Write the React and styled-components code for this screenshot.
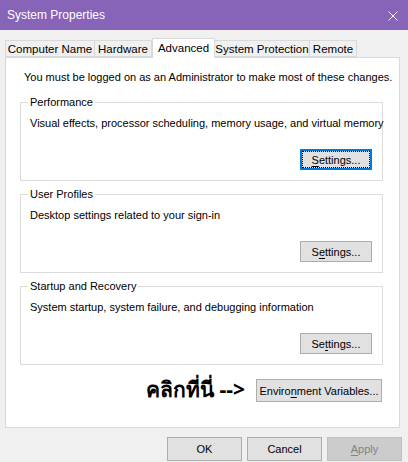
import React from 'react';
import styled, { createGlobalStyle } from 'styled-components';

const GlobalStyle = createGlobalStyle`
  html, body {
    margin: 0;
    padding: 0;
    background: #f0f0f0;
  }
  body {
    font-family: "Liberation Sans", Arial, sans-serif;
    font-size: 11px;
    color: #000;
  }
`;

const tabs = [
  { label: 'Computer Name', width: 90 },
  { label: 'Hardware', width: 57 },
  { label: 'Advanced', width: 63 },
  { label: 'System Protection', width: 95 },
  { label: 'Remote', width: 47 },
];

const groups = [
  {
    title: 'Performance',
    text: 'Visual effects, processor scheduling, memory usage, and virtual memory',
    key: 'S',
    before: '',
    after: 'ettings...',
    focused: true,
  },
  {
    title: 'User Profiles',
    text: 'Desktop settings related to your sign-in',
    key: 'e',
    before: 'S',
    after: 'ttings...',
  },
  {
    title: 'Startup and Recovery',
    text: 'System startup, system failure, and debugging information',
    key: 't',
    before: 'Se',
    after: 'tings...',
  },
];

const App = () => {
  return (
    <>
      <GlobalStyle />
      <Window>
        <TitleBar>
          <Title>System Properties</Title>
          <CloseIcon viewBox="0 0 10 10">
            <path d="M0.5 0.5 L9.5 9.5 M9.5 0.5 L0.5 9.5" />
          </CloseIcon>
        </TitleBar>

        <Content>
          <TabStrip>
            {tabs.map((t) => (
              <Tab key={t.label} $w={t.width} $active={t.label === 'Advanced'}>
                {t.label}
              </Tab>
            ))}
          </TabStrip>

          <Panel>
            <Notice>You must be logged on as an Administrator to make most of these changes.</Notice>

            {groups.map((g) => (
              <Group key={g.title}>
                <Legend>{g.title}</Legend>
                <GroupText>{g.text}</GroupText>
                <ButtonRow>
                  <SettingsButton $focused={g.focused}>
                    {g.before}<u>{g.key}</u>{g.after}
                  </SettingsButton>
                </ButtonRow>
              </Group>
            ))}

            <EnvRow>
              <ClickHere>คลิกที่นี่ --&gt;</ClickHere>
              <EnvButton>Enviro<u>n</u>ment Variables...</EnvButton>
            </EnvRow>
          </Panel>

          <Footer>
            <DialogButton>OK</DialogButton>
            <DialogButton>Cancel</DialogButton>
            <DialogButton $disabled><u>A</u>pply</DialogButton>
          </Footer>
        </Content>
      </Window>
    </>
  );
};

const Window = styled.div`
  width: 408px;
  height: 462px;
  background: #f0f0f0;
  overflow: hidden;
  display: flex;
  flex-direction: column;
`;

const TitleBar = styled.div`
  height: 30px;
  background: #8764b8;
  display: flex;
  align-items: center;
  justify-content: space-between;
  padding: 0 10px 0 7px;
  flex-shrink: 0;
`;

const Title = styled.span`
  color: #fff;
  font-size: 12px;
`;

const CloseIcon = styled.svg`
  width: 10px;
  height: 10px;
  margin-top: 1px;
  stroke: #fff;
  stroke-width: 1;
  fill: none;
`;

const Content = styled.div`
  padding: 8px 8px 0 5px;
  display: flex;
  flex-direction: column;
`;

const TabStrip = styled.div`
  display: flex;
  align-items: flex-end;
  height: 19px;
  position: relative;
  z-index: 1;
`;

const Tab = styled.div`
  width: ${(p) => p.$w}px;
  height: ${(p) => (p.$active ? '20px' : '17px')};
  box-sizing: border-box;
  padding-top: ${(p) => (p.$active ? '2px' : '1px')};
  text-align: center;
  font-size: 11.5px;
  border: 1px solid #d9d9d9;
  border-bottom: ${(p) => (p.$active ? 'none' : '1px solid #d9d9d9')};
  border-left: ${(p) => (p.$active ? '1px solid #d9d9d9' : 'none')};
  background: ${(p) => (p.$active ? '#fff' : '#f0f0f0')};
  position: relative;
  z-index: ${(p) => (p.$active ? 2 : 1)};
  margin-bottom: ${(p) => (p.$active ? '-1px' : '0')};
  line-height: 14px;
  white-space: nowrap;

  &:first-child {
    border-left: 1px solid #d9d9d9;
  }
`;

const Panel = styled.div`
  width: 395px;
  height: 371px;
  box-sizing: border-box;
  border: 1px solid #d9d9d9;
  background: #fff;
  padding: 12px 16px 0 14px;
  display: flex;
  flex-direction: column;
`;

const Notice = styled.div`
  line-height: 15px;
  padding-left: 4px;
  white-space: nowrap;
  margin-bottom: 10px;
`;

const Group = styled.fieldset`
  margin: 0 0 6px;
  border: 1px solid #dcdcdc;
  padding: 7px 10px 10px 9px;
  min-width: 0;
`;

const Legend = styled.legend`
  padding: 0 2px;
  margin-left: -2px;
  line-height: 14px;
`;

const GroupText = styled.div`
  line-height: 15px;
  white-space: nowrap;
`;

const ButtonRow = styled.div`
  display: flex;
  justify-content: flex-end;
  margin-top: 18px;
`;

const BaseButton = styled.div`
  box-sizing: border-box;
  display: flex;
  align-items: center;
  justify-content: center;
  background: #e1e1e1;
  border: 1px solid #adadad;
  font-size: 11px;
  white-space: nowrap;

  u {
    text-underline-offset: 2px;
  }
`;

const SettingsButton = styled(BaseButton)`
  width: 72px;
  height: 21px;
  ${(p) =>
    p.$focused &&
    `
    border: 2px solid #0078d7;
    outline: 1px dotted #000;
    outline-offset: -3px;
  `}
`;

const EnvRow = styled.div`
  display: flex;
  justify-content: flex-end;
  align-items: center;
  gap: 11px;
  margin-top: 8px;
  padding-right: 1px;
`;

const ClickHere = styled.span`
  font-family: "Noto Sans", "DejaVu Sans", sans-serif;
  font-weight: bold;
  font-size: 21px;
  line-height: 23px;
  margin-top: -2px;
`;

const EnvButton = styled(BaseButton)`
  width: 126px;
  height: 23px;
`;

const Footer = styled.div`
  display: flex;
  justify-content: flex-end;
  gap: 5px;
  padding: 9px 0 0;
  margin-right: -2px;
`;

const DialogButton = styled(BaseButton)`
  width: 75px;
  height: 24px;
  ${(p) =>
    p.$disabled &&
    `
    background: #cccccc;
    border-color: #bfbfbf;
    color: #838383;
  `}
`;

export default App;
